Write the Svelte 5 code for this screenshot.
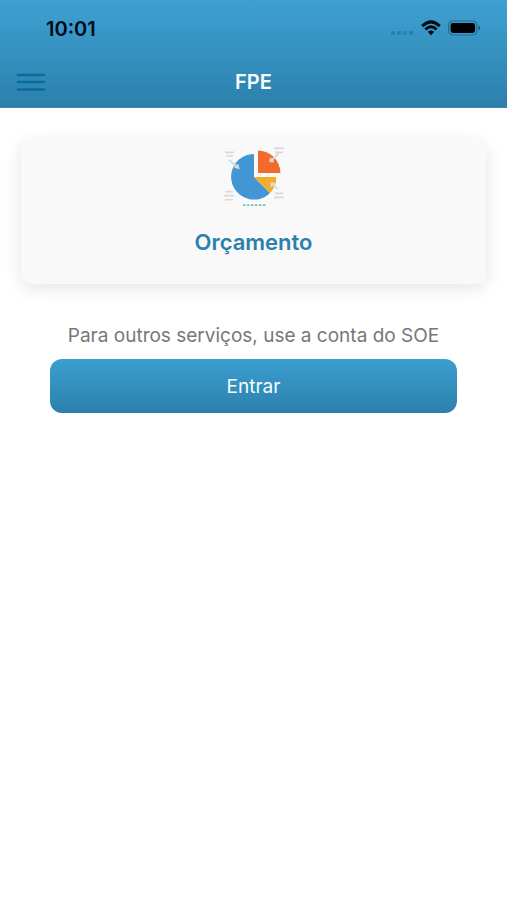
<script>
  const title = 'FPE';
</script>

<div class="screen">
  <header>
    <div class="status">
      <time>10:01</time>
      <div class="indicators">
        <svg width="24" height="16" viewBox="0 0 24 16" aria-hidden="true">
          <g fill="#2b80ad">
            <rect x="1" y="11" width="4" height="4" rx="1" />
            <rect x="7" y="11" width="4" height="4" rx="1" />
            <rect x="13" y="11" width="4" height="4" rx="1" />
            <rect x="19" y="11" width="4" height="4" rx="1" />
          </g>
        </svg>
        <svg width="20" height="16" viewBox="0 0 20 16" aria-hidden="true">
          <g fill="none" stroke="#000810" stroke-width="2.9">
            <path d="M1.2 6.1Q10 -2.3 18.8 6.1" />
            <path d="M4.4 9.5Q10 4.2 15.6 9.5" />
          </g>
          <path d="M6.8 11.8Q10 9.2 13.2 11.8L10 15.2Z" fill="#000810" />
        </svg>
        <svg width="33" height="16" viewBox="0 0 33 16" aria-hidden="true">
          <rect x="0.7" y="1" width="28" height="14" rx="4.2" fill="none" stroke="#226c92" stroke-width="1.2" />
          <rect x="2.6" y="3" width="24.4" height="10" rx="2.4" fill="#000" />
          <path d="M30.2 5.8Q32.3 6.3 32.3 8T30.2 10.4Z" fill="#195f84" />
        </svg>
      </div>
    </div>
    <nav>
      <button class="menu" aria-label="Menu">
        <svg width="30" height="20" viewBox="0 0 30 20" aria-hidden="true">
          <path d="M2 3H28M2 10H28M2 17.4H28" stroke="#096b9f" stroke-width="2.5" stroke-linecap="round" />
        </svg>
      </button>
      <h1>{title}</h1>
    </nav>
  </header>

  <main>
    <button class="card">
      <svg width="64" height="64" viewBox="0 0 64 64" aria-hidden="true">
        <path d="M32 32V9A22.8 22.8 0 1 0 48 48Z" fill="#4196d3" />
        <path d="M32 32L48 48Q54.4 41.5 54.4 32Z" fill="#f4ad2b" />
        <path d="M36 28V5.4A22.6 22.6 0 0 1 58.4 28Z" fill="#f26a2c" />
        <g stroke="#d8d8d8" stroke-width="1.6" fill="none">
          <path d="M3 7.4H12M4 11H11M52 3.4H62M53 7.4H61" />
          <path d="M3 46.6H11M2 50.6H12M3 54.8H11M53 48.4H61M52 52.4H62" />
        </g>
        <g stroke="#d5dce0" stroke-width="1.8" fill="none">
          <path d="M7 15L15 22M12.4 22L16.4 23L15.4 19" />
          <path d="M57 8L49 16M48.6 12.8L48.4 16.4L52 16.4" />
          <path d="M56 44L50 39M49.2 41.8L49.4 38.2L53 38.6" />
        </g>
        <path d="M21 60.2H44" stroke="#62c6b2" stroke-width="1.8" stroke-dasharray="2.4 1.6" />
      </svg>
      <span>Orçamento</span>
    </button>

    <section>
      <p>Para outros serviços, use a conta do SOE</p>
      <button class="enter">Entrar</button>
    </section>
  </main>
</div>

<style>
  :global(body) {
    margin: 0;
    background: #fff;
  }

  .screen {
    font-family: Inter, 'Liberation Sans', sans-serif;
  }

  button {
    border: 0;
    padding: 0;
    font-family: inherit;
    cursor: pointer;
  }

  header {
    background: linear-gradient(#3ea1d3, #2c80ab);
    border-bottom: 1px solid #3d86ab;
  }

  .status {
    display: flex;
    align-items: center;
    justify-content: space-between;
    height: 56px;
    padding: 0 26px 0 46px;
    color: #000c14;
  }

  time {
    font-size: 20px;
    font-weight: 600;
    line-height: 24px;
    padding-top: 2px;
  }

  .indicators {
    display: flex;
    align-items: center;
    gap: 7px;
  }

  svg {
    display: block;
  }

  nav {
    display: grid;
    grid-template-columns: 32px 1fr 32px;
    align-items: center;
    height: 51px;
    padding: 0 16px;
  }

  .menu {
    background: none;
  }

  h1 {
    margin: 0;
    color: #f7fcff;
    font-size: 20px;
    font-weight: 600;
    line-height: 24px;
    text-align: center;
  }

  main {
    padding: 32px 21px;
  }

  .card {
    display: flex;
    flex-direction: column;
    align-items: center;
    gap: 19px;
    width: 100%;
    padding: 5px 0 28px;
    border-radius: 10px;
    background: #f9f9f9;
    box-shadow: 0 4px 18px rgba(0, 0, 0, 0.11);
    color: #2b80ac;
    font-size: 22px;
    font-weight: 600;
    line-height: 28px;
  }

  section {
    padding: 37px 29px 0;
  }

  p {
    margin: 0 0 8px;
    color: #777;
    font-size: 19px;
    line-height: 30px;
    text-align: center;
  }

  .enter {
    display: block;
    width: 100%;
    height: 54px;
    padding-top: 2px;
    border-radius: 12px;
    background: linear-gradient(#3b9fd1, #2c80ab);
    color: #f7fcff;
    font-size: 19px;
    line-height: 24px;
  }
</style>
